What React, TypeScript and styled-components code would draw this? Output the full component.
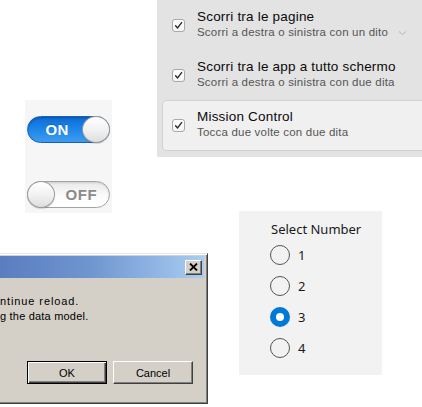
import React from "react";
import styled, { createGlobalStyle } from "styled-components";

const Global = createGlobalStyle`
  html, body { margin: 0; padding: 0; background: #ffffff; }
  * { box-sizing: border-box; }
`;

const Canvas = styled.div`
  display: grid;
  width: 422px;
  height: 407px;
  overflow: hidden;
  grid-template-columns: 25px 87px 45px 51px 31px 143px 40px;
  grid-template-rows: 100px 57px 54px 2px 40px 122px 29px 3px;
`;

/* ---------- Mac gestures panel ---------- */
const MacPanel = styled.section`
  grid-column: 4 / 8;
  grid-row: 1 / 3;
  background: #e3e3e3;
  display: flex;
  flex-direction: column;
  font-family: "Liberation Sans", Arial, sans-serif;
  overflow: hidden;
`;

const MacRow = styled.div<{ $selected?: boolean }>`
  display: flex;
  align-items: flex-start;
  gap: 12px;
  height: ${(p) => (p.$selected ? "51px" : "50px")};
  padding: ${(p) => (p.$selected ? "8px 0 0 9px" : "9px 0 0 15px")};
  margin-left: ${(p) => (p.$selected ? "5px" : "0")};
  margin-right: ${(p) => (p.$selected ? "-6px" : "0")};
  background: ${(p) => (p.$selected ? "#f0f0f0" : "transparent")};
  border: ${(p) => (p.$selected ? "1px solid #d2d2d2" : "none")};
  border-radius: ${(p) => (p.$selected ? "4px" : "0")};
`;

const MacCheck = styled.span`
  display: flex;
  align-items: center;
  justify-content: center;
  width: 13px;
  height: 13px;
  margin-top: 10px;
  flex: none;
  background: linear-gradient(#ffffff, #f4f4f4);
  border: 1px solid #a9a9a9;
  border-radius: 3px;
`;

const MacText = styled.div`
  display: flex;
  flex-direction: column;
`;

const MacTitle = styled.span`
  font-size: 13.5px;
  line-height: 16px;
  letter-spacing: 0.2px;
  color: #0a0a0a;
  white-space: nowrap;
`;

const MacSub = styled.span`
  font-size: 11.5px;
  line-height: 15px;
  letter-spacing: 0.2px;
  color: #555555;
  white-space: nowrap;
`;

const Chevron = styled.svg`
  flex: none;
  margin-top: 21px;
  margin-left: -2px;
`;

/* ---------- iOS-ish toggles ---------- */
const ToggleBox = styled.section`
  grid-column: 2 / 3;
  grid-row: 2 / 5;
  background: #f6f6f6;
  display: flex;
  flex-direction: column;
  padding: 16px 0 0 2px;
  gap: 38px;
  font-family: "Liberation Sans", Arial, sans-serif;
`;

const Track = styled.div<{ $on: boolean }>`
  display: flex;
  align-items: center;
  flex-direction: ${(p) => (p.$on ? "row" : "row-reverse")};
  width: 83px;
  height: 27px;
  border-radius: 14px;
  border: 1px solid ${(p) => (p.$on ? "#1462bf" : "#a3a3a3")};
  background: ${(p) =>
    p.$on
      ? "linear-gradient(#0e6bd3 0%, #1b84e8 45%, #3f9cf0 100%)"
      : "linear-gradient(#e9e9e9 0%, #fbfbfb 55%, #ffffff 100%)"};
  box-shadow: ${(p) => (p.$on ? "inset 0 1px 2px rgba(0,0,0,0.25)" : "inset 0 1px 2px rgba(0,0,0,0.12)")};
`;

const TrackLabel = styled.span<{ $on: boolean }>`
  flex: 1;
  text-align: center;
  font-size: 15px;
  font-weight: bold;
  letter-spacing: ${(p) => (p.$on ? "0.3px" : "0.6px")};
  color: ${(p) => (p.$on ? "#ffffff" : "#8a8a8a")};
  padding-left: ${(p) => (p.$on ? "3px" : "0")};
  text-shadow: ${(p) => (p.$on ? "0 -1px 0 rgba(0,0,0,0.2)" : "0 1px 0 #ffffff")};
`;

const Knob = styled.span`
  flex: none;
  width: 28px;
  height: 27px;
  margin: -1px;
  border-radius: 50%;
  border: 1px solid #9c9c9c;
  background: linear-gradient(#ffffff 0%, #f2f2f2 50%, #dedede 100%);
  box-shadow: 0 1px 1px rgba(0,0,0,0.15);
`;

/* ---------- Windows classic dialog ---------- */
const Dialog = styled.section`
  grid-column: 1 / 5;
  grid-row: 6 / 8;
  display: flex;
  flex-direction: column;
  background: #d4d0c8;
  border-top: 1px solid #e4e4e4;
  border-right: 1px solid #404040;
  border-bottom: 1px solid #404040;
  box-shadow: inset 0 1px 0 #ffffff, inset -1px -1px 0 #808080;
  padding: 2px 2px 2px 0;
  font-family: "Liberation Sans", Tahoma, sans-serif;
  font-size: 11px;
  color: #000000;
`;

const TitleBar = styled.div`
  display: flex;
  align-items: center;
  justify-content: flex-end;
  height: 22px;
  margin-right: 1px;
  padding-right: 2px;
  background: linear-gradient(90deg, #5a7dbf 0%, #7096d0 45%, #a9cdf2 100%);
`;

const CloseButton = styled.span`
  display: flex;
  align-items: center;
  justify-content: center;
  width: 17px;
  height: 15px;
  background: #d4d0c8;
  border-top: 1px solid #ffffff;
  border-left: 1px solid #ffffff;
  border-right: 1px solid #404040;
  border-bottom: 1px solid #404040;
  box-shadow: inset -1px -1px 0 #808080;
`;

const DialogBody = styled.div`
  flex: 1;
  display: flex;
  flex-direction: column;
  padding: 16px 12px 17px 0;
`;

const DialogLine = styled.div<{ $spacing: number }>`
  line-height: 15px;
  white-space: nowrap;
  letter-spacing: ${(p) => p.$spacing}px;
`;

const ButtonRow = styled.div`
  margin-top: auto;
  display: flex;
  justify-content: flex-end;
  gap: 6px;
`;

const WinButton = styled.span<{ $default?: boolean }>`
  display: flex;
  align-items: center;
  justify-content: center;
  width: 80px;
  height: 23px;
  background: #d4d0c8;
  border: 1px solid;
  border-color: ${(p) => (p.$default ? "#000000" : "#ffffff #404040 #404040 #ffffff")};
  box-shadow: ${(p) =>
    p.$default
      ? "inset 1px 1px 0 #ffffff, inset -1px -1px 0 #404040, inset -2px -2px 0 #808080"
      : "inset -1px -1px 0 #808080"};
`;

/* ---------- Windows 10 radio group ---------- */
const RadioPanel = styled.section`
  grid-column: 6 / 7;
  grid-row: 4 / 7;
  background: #f2f2f2;
  display: flex;
  flex-direction: column;
  padding: 9px 0 0 31px;
  font-family: "Noto Sans", "Open Sans", sans-serif;
  color: #1a1a1a;
`;

const RadioHeader = styled.div`
  font-size: 13px;
  line-height: 18px;
  margin-bottom: 1px;
  margin-left: 1px;
`;

const RadioRow = styled.div`
  display: flex;
  align-items: center;
  gap: 8px;
  height: 31px;
  font-size: 13px;
`;

const RadioCircle = styled.span<{ $checked?: boolean }>`
  display: flex;
  align-items: center;
  justify-content: center;
  width: 20px;
  height: 20px;
  border-radius: 50%;
  flex: none;
  border: ${(p) => (p.$checked ? "none" : "1.5px solid #555555")};
  background: ${(p) => (p.$checked ? "#0078d7" : "transparent")};
`;

const RadioDot = styled.span`
  width: 8px;
  height: 8px;
  border-radius: 50%;
  background: #ffffff;
`;

const CheckMark = () => (
  <svg width="9" height="9" viewBox="0 0 9 9">
    <path d="M1.6 4.8 L3.6 6.9 L7.6 1.6" fill="none" stroke="#2a2a2a" strokeWidth="1.4" strokeLinecap="round" strokeLinejoin="round" />
  </svg>
);

const CloseX = () => (
  <svg width="9" height="8" viewBox="0 0 9 8">
    <path d="M1 0.5 L8 7.5 M8 0.5 L1 7.5" stroke="#000000" strokeWidth="1.8" />
  </svg>
);

const macItems = [
  { title: "Scorri tra le pagine", sub: "Scorri a destra o sinistra con un dito", chevron: true },
  { title: "Scorri tra le app a tutto schermo", sub: "Scorri a destra o sinistra con due dita" },
  { title: "Mission Control", sub: "Tocca due volte con due dita", selected: true },
];

export default function App() {
  const radios = [1, 2, 3, 4];
  const selected = 3;
  return (
    <>
      <Global />
      <Canvas>
        <MacPanel>
          {macItems.map((it) => (
            <MacRow key={it.title} $selected={it.selected}>
              <MacCheck>
                <CheckMark />
              </MacCheck>
              <MacText>
                <MacTitle>{it.title}</MacTitle>
                <MacSub>{it.sub}</MacSub>
              </MacText>
              {it.chevron && (
                <Chevron width="9" height="6" viewBox="0 0 9 6">
                  <path d="M1 1.5 L4.5 4.5 L8 1.5" fill="none" stroke="#b3b3b3" strokeWidth="1" />
                </Chevron>
              )}
            </MacRow>
          ))}
        </MacPanel>

        <ToggleBox>
          <Track $on>
            <TrackLabel $on>ON</TrackLabel>
            <Knob />
          </Track>
          <Track $on={false}>
            <TrackLabel $on={false}>OFF</TrackLabel>
            <Knob />
          </Track>
        </ToggleBox>

        <Dialog>
          <TitleBar>
            <CloseButton>
              <CloseX />
            </CloseButton>
          </TitleBar>
          <DialogBody>
            <DialogLine $spacing={0.9}>ntinue reload.</DialogLine>
            <DialogLine $spacing={0.2}>g the data model.</DialogLine>
            <ButtonRow>
              <WinButton $default>OK</WinButton>
              <WinButton>Cancel</WinButton>
            </ButtonRow>
          </DialogBody>
        </Dialog>

        <RadioPanel>
          <RadioHeader>Select Number</RadioHeader>
          {radios.map((n) => (
            <RadioRow key={n}>
              <RadioCircle $checked={n === selected}>{n === selected && <RadioDot />}</RadioCircle>
              <span>{n}</span>
            </RadioRow>
          ))}
        </RadioPanel>
      </Canvas>
    </>
  );
}
